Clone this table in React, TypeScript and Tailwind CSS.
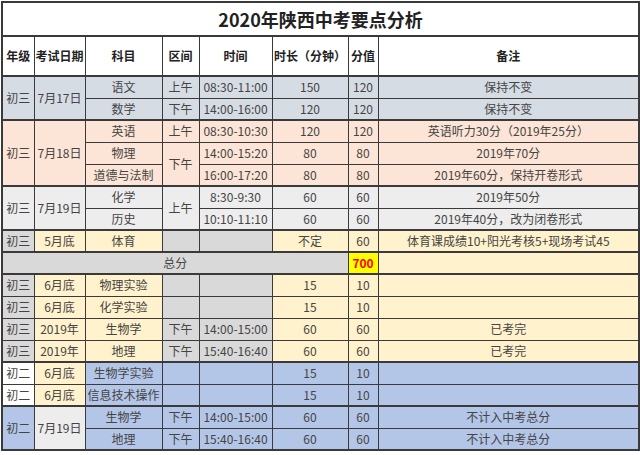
import React from 'react';

type Cell = {
  t?: string;
  bg: string;
  rs?: number;
  cs?: number;
  hl?: boolean;
};

type Row = { cells: Cell[]; thick?: boolean };

const BG = {
  slate: 'bg-[#d6dce4]',
  peach: 'bg-[#fce4d6]',
  light: 'bg-[#ededed]',
  grey: 'bg-[#d9d9d9]',
  cream: 'bg-[#fff2cc]',
  blue: 'bg-[#b4c6e7]',
  white: 'bg-white',
  yellow: 'bg-[#ffff00]',
};

const rows: Row[] = [
  {
    thick: true,
    cells: [
      { t: '初三', bg: BG.slate, rs: 2 },
      { t: '7月17日', bg: BG.slate, rs: 2 },
      { t: '语文', bg: BG.slate },
      { t: '上午', bg: BG.slate },
      { t: '08:30-11:00', bg: BG.slate },
      { t: '150', bg: BG.slate },
      { t: '120', bg: BG.slate },
      { t: '保持不变', bg: BG.slate },
    ],
  },
  {
    cells: [
      { t: '数学', bg: BG.slate },
      { t: '下午', bg: BG.slate },
      { t: '14:00-16:00', bg: BG.slate },
      { t: '120', bg: BG.slate },
      { t: '120', bg: BG.slate },
      { t: '保持不变', bg: BG.slate },
    ],
  },
  {
    thick: true,
    cells: [
      { t: '初三', bg: BG.peach, rs: 3 },
      { t: '7月18日', bg: BG.peach, rs: 3 },
      { t: '英语', bg: BG.peach },
      { t: '上午', bg: BG.peach },
      { t: '08:30-10:30', bg: BG.peach },
      { t: '120', bg: BG.peach },
      { t: '120', bg: BG.peach },
      { t: '英语听力30分（2019年25分）', bg: BG.peach },
    ],
  },
  {
    cells: [
      { t: '物理', bg: BG.peach },
      { t: '下午', bg: BG.peach, rs: 2 },
      { t: '14:00-15:20', bg: BG.peach },
      { t: '80', bg: BG.peach },
      { t: '80', bg: BG.peach },
      { t: '2019年70分', bg: BG.peach },
    ],
  },
  {
    cells: [
      { t: '道德与法制', bg: BG.peach },
      { t: '16:00-17:20', bg: BG.peach },
      { t: '80', bg: BG.peach },
      { t: '80', bg: BG.peach },
      { t: '2019年60分，保持开卷形式', bg: BG.peach },
    ],
  },
  {
    thick: true,
    cells: [
      { t: '初三', bg: BG.light, rs: 2 },
      { t: '7月19日', bg: BG.light, rs: 2 },
      { t: '化学', bg: BG.light },
      { t: '上午', bg: BG.light, rs: 2 },
      { t: '8:30-9:30', bg: BG.light },
      { t: '60', bg: BG.light },
      { t: '60', bg: BG.light },
      { t: '2019年50分', bg: BG.light },
    ],
  },
  {
    cells: [
      { t: '历史', bg: BG.light },
      { t: '10:10-11:10', bg: BG.light },
      { t: '60', bg: BG.light },
      { t: '60', bg: BG.light },
      { t: '2019年40分，改为闭卷形式', bg: BG.light },
    ],
  },
  {
    thick: true,
    cells: [
      { t: '初三', bg: BG.grey },
      { t: '5月底', bg: BG.cream },
      { t: '体育', bg: BG.cream },
      { bg: BG.grey },
      { bg: BG.grey },
      { t: '不定', bg: BG.cream },
      { t: '60', bg: BG.cream },
      { t: '体育课成绩10+阳光考核5+现场考试45', bg: BG.cream },
    ],
  },
  {
    thick: true,
    cells: [
      { t: '总分', bg: BG.grey, cs: 6 },
      { t: '700', bg: BG.yellow, hl: true },
      { bg: BG.cream },
    ],
  },
  {
    thick: true,
    cells: [
      { t: '初三', bg: BG.grey },
      { t: '6月底', bg: BG.cream },
      { t: '物理实验', bg: BG.cream },
      { bg: BG.grey },
      { bg: BG.grey },
      { t: '15', bg: BG.cream },
      { t: '10', bg: BG.cream },
      { bg: BG.cream },
    ],
  },
  {
    cells: [
      { t: '初三', bg: BG.grey },
      { t: '6月底', bg: BG.cream },
      { t: '化学实验', bg: BG.cream },
      { bg: BG.grey },
      { bg: BG.grey },
      { t: '15', bg: BG.cream },
      { t: '10', bg: BG.cream },
      { bg: BG.cream },
    ],
  },
  {
    cells: [
      { t: '初三', bg: BG.grey },
      { t: '2019年', bg: BG.cream },
      { t: '生物学', bg: BG.cream },
      { t: '下午', bg: BG.grey },
      { t: '14:00-15:00', bg: BG.grey },
      { t: '60', bg: BG.cream },
      { t: '60', bg: BG.cream },
      { t: '已考完', bg: BG.cream },
    ],
  },
  {
    cells: [
      { t: '初三', bg: BG.grey },
      { t: '2019年', bg: BG.cream },
      { t: '地理', bg: BG.cream },
      { t: '下午', bg: BG.grey },
      { t: '15:40-16:40', bg: BG.grey },
      { t: '60', bg: BG.cream },
      { t: '60', bg: BG.cream },
      { t: '已考完', bg: BG.cream },
    ],
  },
  {
    thick: true,
    cells: [
      { t: '初二', bg: BG.white },
      { t: '6月底', bg: BG.cream },
      { t: '生物学实验', bg: BG.blue },
      { bg: BG.blue },
      { bg: BG.blue },
      { t: '15', bg: BG.blue },
      { t: '10', bg: BG.blue },
      { bg: BG.blue },
    ],
  },
  {
    cells: [
      { t: '初二', bg: BG.white },
      { t: '6月底', bg: BG.cream },
      { t: '信息技术操作', bg: BG.blue },
      { bg: BG.blue },
      { bg: BG.blue },
      { t: '15', bg: BG.blue },
      { t: '10', bg: BG.blue },
      { bg: BG.blue },
    ],
  },
  {
    thick: true,
    cells: [
      { t: '初二', bg: BG.blue, rs: 2 },
      { t: '7月19日', bg: BG.light, rs: 2 },
      { t: '生物学', bg: BG.blue },
      { t: '下午', bg: BG.blue },
      { t: '14:00-15:00', bg: BG.blue },
      { t: '60', bg: BG.blue },
      { t: '60', bg: BG.blue },
      { t: '不计入中考总分', bg: BG.blue },
    ],
  },
  {
    cells: [
      { t: '地理', bg: BG.blue },
      { t: '下午', bg: BG.blue },
      { t: '15:40-16:40', bg: BG.blue },
      { t: '60', bg: BG.blue },
      { t: '60', bg: BG.blue },
      { t: '不计入中考总分', bg: BG.blue },
    ],
  },
];

const headers = ['年级', '考试日期', '科目', '区间', '时间', '时长（分钟）', '分值', '备注'];
const widths = ['w-[32px]', 'w-[51px]', 'w-[77px]', 'w-[37px]', 'w-[73px]', 'w-[76px]', 'w-[30px]', 'w-[261px]'];

export default function App() {
  return (
    <div className="h-[455px] w-[640px] bg-white pl-px pt-px font-['Noto_Sans_CJK_SC','Noto_Sans',sans-serif] text-[12px] text-[#444]">
      <table className="w-[637px] table-fixed border-collapse border-2 border-[#3a3a3a]">
        <colgroup>
          {widths.map((w, i) => (
            <col key={i} className={w} />
          ))}
        </colgroup>
        <tbody>
          <tr className="h-[34px]">
            <td colSpan={8} className="border-b-2 border-[#3a3a3a] text-center text-[18px] font-bold leading-none text-[#222]">
              2020年陕西中考要点分析
            </td>
          </tr>
          <tr className="h-[40px]">
            {headers.map((h) => (
              <td key={h} className="border border-[#3a3a3a] p-0 text-center text-[12px] font-bold text-[#222]">
                {h}
              </td>
            ))}
          </tr>
          {rows.map((row, ri) => (
            <tr key={ri} className="h-[22px]">
              {row.cells.map((c, ci) => (
                <td
                  key={ci}
                  rowSpan={c.rs}
                  colSpan={c.cs}
                  className={`${c.bg} ${row.thick ? 'border-t-2' : ''} border border-[#3a3a3a] p-0 text-center leading-none ${
                    c.hl ? 'font-bold text-[#ff0000]' : ''
                  }`}
                >
                  {c.t}
                </td>
              ))}
            </tr>
          ))}
        </tbody>
      </table>
    </div>
  );
}
